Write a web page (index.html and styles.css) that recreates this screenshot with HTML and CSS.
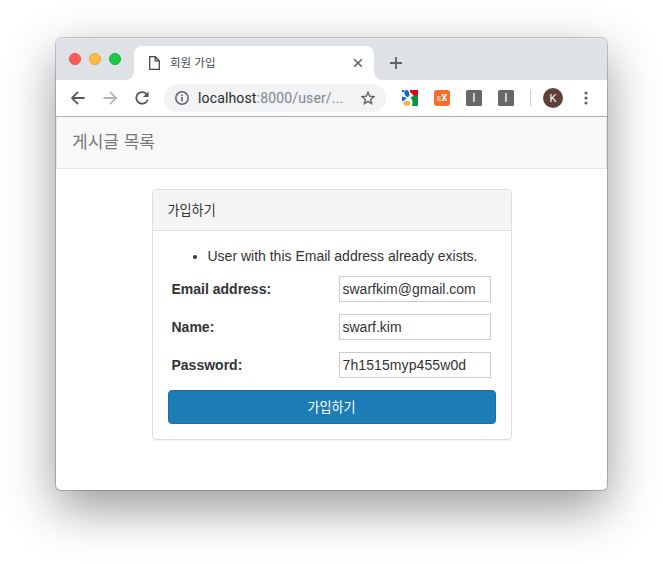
FILE: index.html
```html
<!DOCTYPE html>
<html lang="ko">
<head>
<meta charset="utf-8">
<title>회원 가입</title>
<link rel="stylesheet" href="styles.css">
</head>
<body>
<div class="window">
  <div class="tabstrip">
    <div class="lights"><i class="red"></i><i class="yellow"></i><i class="green"></i></div>
    <div class="tab">
      <svg class="file" width="11" height="14" viewBox="0 0 11 14"><path d="M.7.7h5.6l4 4v8.6H.7zM6.2.7v4.2h4.1" fill="none" stroke="#45484b" stroke-width="1.3"/></svg>
      <span class="tab-title">회원 가입</span>
      <svg width="10" height="10" viewBox="0 0 10 10"><path d="M1.2 1.2l7.6 7.6M8.8 1.2L1.2 8.8" stroke="#5f6368" stroke-width="1.6"/></svg>
    </div>
    <svg class="plus" width="12" height="12" viewBox="0 0 12 12"><path d="M6 0v12M0 6h12" stroke="#5f6368" stroke-width="1.8"/></svg>
  </div>
  <div class="toolbar">
    <svg class="nav-icon" viewBox="0 0 16 16"><path d="M15 8H2M8 1.4L1.5 8 8 14.6" fill="none" stroke="#53575b" stroke-width="1.9"/></svg>
    <svg class="nav-icon" viewBox="0 0 16 16"><path d="M1 8h13M8 1.4L14.500 8 8 14.6" fill="none" stroke="#b5b6b8" stroke-width="1.9"/></svg>
    <svg class="nav-icon" viewBox="0 0 16 16"><path d="M13.200 4.300A6.200 6.200 0 1 0 14 9.800" fill="none" stroke="#53575b" stroke-width="1.9"/><path d="M15 1v6H9z" fill="#53575b"/></svg>
    <div class="omnibox">
      <svg width="14" height="14" viewBox="0 0 14 14"><circle cx="7" cy="7" r="6.200" fill="none" stroke="#5f6368" stroke-width="1.5"/><path d="M7 6v4.300M7 3.400v1.600" stroke="#5f6368" stroke-width="1.6"/></svg>
      <span class="url">localhost<span>:8000/user/...</span></span>
      <svg width="14" height="14" viewBox="0 0 14 14"><path d="M7 1.300l1.650 3.900 4.350.4-3.300 2.850 1 4.200L7 10.400l-3.700 2.250 1-4.200L1 5.600l4.350-.4z" fill="none" stroke="#5f6368" stroke-width="1.35"/></svg>
    </div>
    <div class="extensions">
      <svg width="16" height="16" viewBox="0 0 16 16"><path fill="#fff" d="M0 0h16v16H0z"/><path fill="#e90015" d="M8 0h8v6h-4L8 2z"/><path fill="#06943e" d="M8.500 7.500L12 5.500h4V16H9.500c2-3 1-6-1-8.500z"/><path fill="#0868d0" d="M0 0h2v2H0zM0 6.500l5 1.500-3 2.500-2 1z"/><ellipse cx="4.900" cy="3.500" rx="2.400" ry="3.600" fill="#0868d0" transform="rotate(-15 4.900 3.500)"/><ellipse cx="4.800" cy="13.300" rx="3.500" ry="2.500" fill="#fab432"/></svg>
      <span class="ext ex"><span>E</span>X</span>
      <span class="ext">I</span>
      <span class="ext">I</span>
    </div>
    <span class="divider"></span>
    <span class="avatar">K</span>
    <svg class="menu" width="4" height="14" viewBox="0 0 4 14" fill="#5f6368"><circle cx="2" cy="2" r="1.600"/><circle cx="2" cy="7" r="1.600"/><circle cx="2" cy="12" r="1.600"/></svg>
  </div>
  <div class="navbar"><span>게시글 목록</span></div>
  <div class="panel">
    <div class="panel-heading">가입하기</div>
    <form class="panel-body">
      <ul><li>User with this Email address already exists.</li></ul>
      <div class="row"><label for="email">Email address:</label><input id="email" type="text" value="swarfkim@gmail.com"></div>
      <div class="row"><label for="name">Name:</label><input id="name" type="text" value="swarf.kim"></div>
      <div class="row"><label for="pw">Password:</label><input id="pw" class="pw" type="text" value="7h1515myp455w0d"></div>
      <button type="button">가입하기</button>
    </form>
  </div>
</div>
</body>
</html>
```
FILE: styles.css
```css
* { box-sizing: border-box; }
body {
  margin: 0;
  height: 564px;
  padding: 38px 56px;
  overflow: hidden;
  background: #fff;
  color: #333;
  font: 14px/20px "Liberation Sans", "Noto Sans CJK KR", sans-serif;
}
.window {
  width: 551px;
  height: 452px;
  overflow: hidden;
  background: #fff;
  border-radius: 6px 6px 5px 5px;
  box-shadow: 0 0 0 1px rgba(0,0,0,.2), 0 18px 50px rgba(0,0,0,.41);
}
.tabstrip {
  display: flex;
  align-items: center;
  height: 42px;
  background: #dee1e6;
  box-shadow: inset 0 1px #e9ebee;
}
.lights { display: flex; gap: 8px; width: 78px; padding-left: 13px; }
.lights i { width: 12px; height: 12px; border-radius: 50%; border: 1px solid; }
.lights .red { background: #ff5b56; border-color: #e5504b; }
.lights .yellow { background: #ffbd3e; border-color: #e2a536; }
.lights .green { background: #18cb49; border-color: #13ae3c; }
.tab {
  position: relative;
  display: flex;
  align-items: center;
  align-self: flex-end;
  width: 240px;
  height: 34px;
  padding: 0 11px 0 15px;
  background: #fff;
  border-radius: 8px 8px 0 0;
}
.tab::before, .tab::after {
  content: "";
  position: absolute;
  bottom: 0;
  width: 8px;
  height: 8px;
}
.tab::before { left: -8px; background: radial-gradient(circle at 0 0, transparent 7.5px, #fff 8px); }
.tab::after { right: -8px; background: radial-gradient(circle at 100% 0, transparent 7.5px, #fff 8px); }
.tab-title { flex: 1; margin-left: 10px; font-size: 11.5px; line-height: 18px; color: #45494d; }
.plus { margin: 8px 0 0 16px; }
.toolbar {
  display: flex;
  align-items: center;
  height: 37px;
  padding: 0 0 1px 14px;
  border-bottom: 1px solid #b0b0b0;
}
.nav-icon { width: 16px; height: 16px; margin-right: 16px; padding: .5px; }
.omnibox {
  display: flex;
  align-items: center;
  width: 222px;
  height: 28px;
  margin-left: -2px;
  padding: 0 11px;
  border-radius: 14px;
  background: #f1f3f4;
}
.url { flex: 1; margin-left: 9px; font: 14px/20px Roboto, sans-serif; letter-spacing: .15px; color: #292b2e; white-space: nowrap; }
.url span { color: #80868b; }
.extensions { display: flex; gap: 16px; margin-left: 16px; }
.ext {
  width: 16px;
  height: 16px;
  border-radius: 1.5px;
  background: #686868;
  color: #fff;
  font: 12px/16px Roboto, sans-serif;
  text-align: center;
}
.ex { border-radius: 3px; background: #fb6b2a; font-size: 9px; line-height: 17px; font-weight: 700; }
.ex span { opacity: .7; font-size: 8px; }
.divider { width: 1px; height: 16px; margin-left: 16px; background: #cfd0d2; }
.avatar {
  width: 20px;
  height: 20px;
  margin-left: 12px;
  border-radius: 50%;
  background: #5d4037;
  color: #fff;
  font: 11px/21px Roboto, sans-serif;
  text-align: center;
}
.menu { margin-left: 20.5px; }
.navbar {
  height: 52px;
  padding: 16px 15px;
  background: #f8f8f8;
  border: 1px solid #e7e7e7;
  border-top: 0;
  color: #777;
  font-size: 17px;
  line-height: 20px;
}
.panel {
  width: 360px;
  height: 251px;
  margin: 20px auto 0;
  border: 1px solid #ddd;
  border-radius: 4px;
  box-shadow: 0 1px 1px rgba(0,0,0,.05);
}
.panel-heading { height: 41px; padding: 11px 15px 9px; background: #f5f5f5; border-bottom: 1px solid #ddd; border-radius: 3px 3px 0 0; font-size: 13.1px; }
.panel-body { padding: 15px; }
ul { margin: 0 0 4px; padding-left: 40px; }
.row { display: flex; align-items: center; height: 38px; padding: 0 5px 0 4px; }
label { flex: 1; font-weight: 700; }
input {
  width: 152px;
  height: 26px;
  padding: 2px 3px;
  border: 1px solid #ccc;
  background: #fff;
  color: #333;
  font: inherit;
}
.pw { letter-spacing: .1px; }
button {
  display: block;
  width: 100%;
  height: 34px;
  padding: 1px 0 0;
  margin-top: 6px;
  border: 1px solid #1b6d9f;
  border-radius: 4px;
  background: #1b7cb6;
  color: #fff;
  font: inherit;
  font-size: 13.1px;
}
```
